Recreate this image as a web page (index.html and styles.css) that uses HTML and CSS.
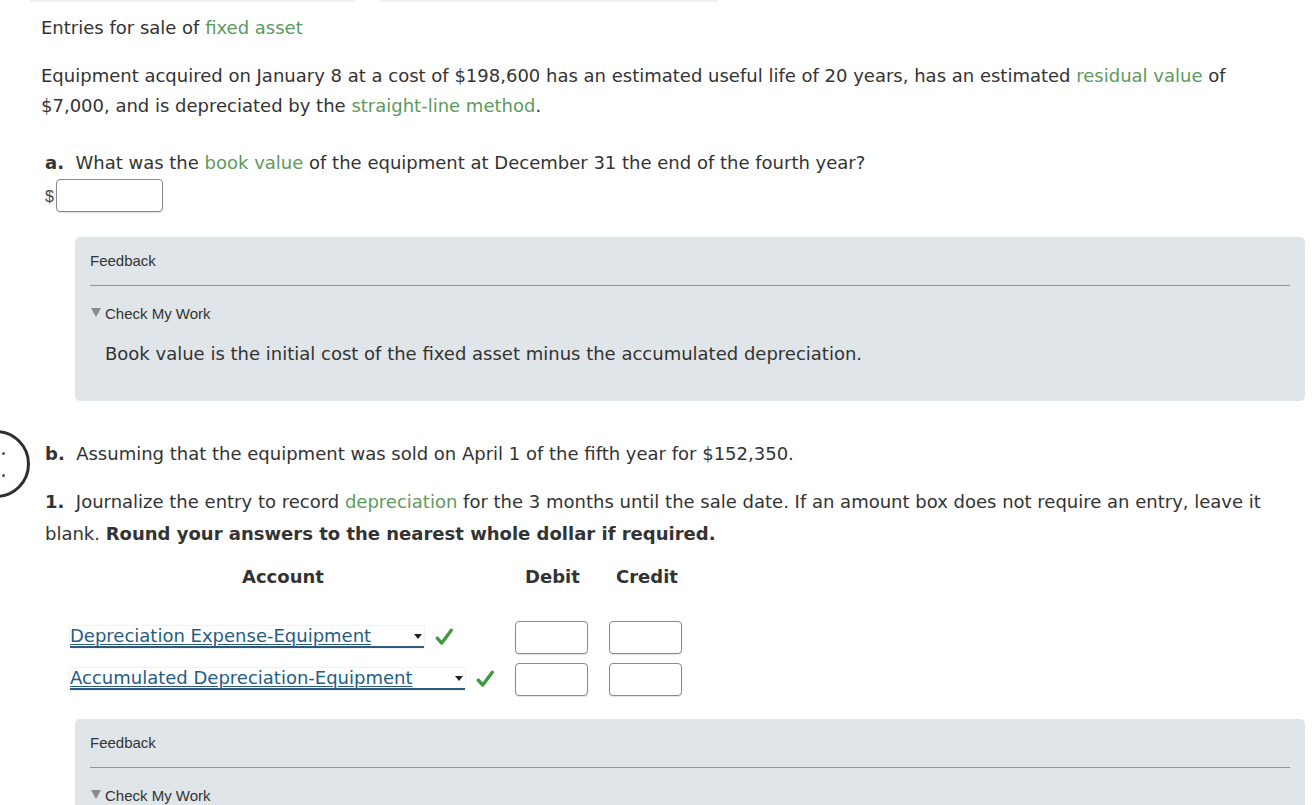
FILE: index.html
```html
<!DOCTYPE html>
<html>
<head>
<meta charset="utf-8">
<link rel="stylesheet" href="styles.css">
</head>
<body>
<div class="topbars"><span class="tb tb1"></span><span class="tb tb2"></span></div>
<div class="side-circle"><span class="dot d1"></span><span class="dot d2"></span></div>
<main class="page">
  <h1 class="title">Entries for sale of <span class="term">fixed asset</span></h1>
  <p class="intro">Equipment acquired on January 8 at a cost of $198,600 has an estimated useful life of 20 years, has an estimated <span class="term">residual value</span> of $7,000, and is depreciated by the <span class="term">straight-line method</span>.</p>

  <section class="part">
    <p class="q"><b>a.</b>&nbsp; What was the <span class="term">book value</span> of the equipment at December 31 the end of the fourth year?</p>
    <div class="money"><span class="dollar">$</span><span class="box wide"></span></div>
  </section>

  <div class="feedback">
    <div class="fb-head">Feedback</div>
    <div class="fb-rule"></div>
    <div class="fb-toggle"><span class="tri"></span>Check My Work</div>
    <p class="fb-text">Book value is the initial cost of the fixed asset minus the accumulated depreciation.</p>
  </div>

  <section class="part partb">
    <p class="q"><b>b.</b>&nbsp; Assuming that the equipment was sold on April 1 of the fifth year for $152,350.</p>
    <p class="q q1"><b>1.</b>&nbsp; Journalize the entry to record <span class="term">depreciation</span> for the 3 months until the sale date. If an amount box does not require an entry, leave it blank. <b>Round your answers to the nearest whole dollar if required.</b></p>
  </section>

  <div class="journal">
    <div class="jhead">
      <span class="h-acct">Account</span>
      <span class="h-debit">Debit</span>
      <span class="h-credit">Credit</span>
    </div>
    <div class="jrow r1">
      <div class="acct"><span class="sel s1">Depreciation Expense-Equipment<span class="arrow"></span></span><svg class="check" viewBox="0 0 16 16" width="18" height="18"><path d="M2 9 L6 13.4 L14.5 2" fill="none" stroke="#3f9b3f" stroke-width="3" stroke-linecap="round" stroke-linejoin="round"/></svg></div>
      <span class="box amt"></span><span class="box amt"></span>
    </div>
    <div class="jrow r2">
      <div class="acct"><span class="sel s2">Accumulated Depreciation-Equipment<span class="arrow"></span></span><svg class="check" viewBox="0 0 16 16" width="18" height="18"><path d="M2 9 L6 13.4 L14.5 2" fill="none" stroke="#3f9b3f" stroke-width="3" stroke-linecap="round" stroke-linejoin="round"/></svg></div>
      <span class="box amt"></span><span class="box amt"></span>
    </div>
  </div>

  <div class="feedback fb2">
    <div class="fb-head">Feedback</div>
    <div class="fb-rule"></div>
    <div class="fb-toggle"><span class="tri"></span>Check My Work</div>
  </div>
</main>
</body>
</html>
```

FILE: styles.css
```css
html, body {
  margin: 0;
  padding: 0;
  background: #fff;
  overflow: hidden;
}
body {
  font-family: "DejaVu Sans", Verdana, sans-serif;
  font-size: 18px;
  color: #333;
  height: 805px;
  position: relative;
}
.topbars {
  display: flex;
  height: 3px;
}
.tb {
  display: block;
  height: 2px;
  background: #f1f1f1;
}
.tb1 { margin-left: 30px; width: 325px; }
.tb2 { margin-left: 25px; width: 338px; }

.side-circle {
  position: absolute;
  left: -38px;
  top: 430px;
  width: 62px;
  height: 62px;
  border: 3px solid #2e2e2e;
  border-radius: 50%;
}
.dot {
  position: absolute;
  width: 3px;
  height: 3px;
  background: #555;
  border-radius: 50%;
  left: 37px;
}
.d1 { top: 19px; }
.d2 { top: 41px; }

.page {
  padding-left: 41px;
}
.term { color: #5d9a5d; }

.title {
  font-size: 18px;
  font-weight: normal;
  margin: 0;
  padding-top: 14px;
  line-height: 22px;
}
.intro {
  margin: 22px 0 0;
  line-height: 30px;
  width: 1215px;
}
.part {
  padding-left: 4px;
}
.q {
  margin: 0;
  line-height: 32px;
}
.part .q:first-child { margin-top: 26px; }
.q b { font-weight: bold; }
.money {
  display: flex;
  align-items: center;
  height: 34px;
  margin-top: -1px;
}
.dollar {
  font-family: "Liberation Sans", Arial, sans-serif;
  font-size: 16px;
  color: #444;
  width: 11px;
  padding-top: 4px;
}
.box {
  display: block;
  box-sizing: border-box;
  border: 1px solid #8a8a8a;
  border-radius: 4px;
  background: #fff;
  box-shadow: 0 1px 1px rgba(0,0,0,0.12);
}
.box.wide { width: 107px; height: 33px; }

.feedback {
  margin: 25px 0 0 34px;
  width: 1230px;
  background: #dfe5e8;
  border-radius: 5px;
  box-sizing: border-box;
  padding: 14px 15px 0 15px;
  height: 164px;
  font-family: "Liberation Sans", Arial, sans-serif;
  font-size: 15px;
  color: #333;
}
.fb-head {
  line-height: 20px;
}
.fb-rule {
  height: 1px;
  background: #8b9599;
  margin-top: 14px;
}
.fb-toggle {
  margin-top: 19px;
  line-height: 18px;
  display: flex;
  align-items: center;
}
.tri {
  display: inline-block;
  width: 0;
  height: 0;
  border-left: 5px solid transparent;
  border-right: 5px solid transparent;
  border-top: 9px solid #8a8a8a;
  margin-right: 4px;
  margin-left: 1px;
  margin-top: -3px;
}
.fb-text {
  margin: 20px 0 0 15px;
  font-family: "DejaVu Sans", Verdana, sans-serif;
  font-size: 18px;
  line-height: 22px;
}

.partb .q:first-child { margin-top: 37px; }
.q1 { margin-top: 16px !important; }

.journal {
  padding-left: 4px;
}
.jhead {
  display: flex;
  font-weight: bold;
  font-size: 18px;
  line-height: 22px;
  margin-top: 16px;
}
.h-acct { margin-left: 197px; width: 283px; }
.h-debit { width: 91px; }

.jrow {
  display: flex;
  align-items: center;
  height: 32px;
}
.r1 { margin-top: 33px; }
.r2 { margin-top: 10px; }
.acct {
  width: 470px;
  box-sizing: border-box;
  padding-left: 25px;
  display: flex;
  align-items: center;
}
.sel {
  position: relative;
  display: inline-block;
  box-sizing: border-box;
  color: #245d86;
  font-size: 18px;
  line-height: 20px;
  border-bottom: 2px solid #2c5a7c;
  text-decoration: underline;
  text-decoration-color: #2c5a7c;
  text-underline-offset: 2px;
  box-shadow: 0 0 2px rgba(0,0,0,0.15);
  white-space: nowrap;
}
.s1 { width: 354px; }
.s2 { width: 395px; }
.arrow {
  position: absolute;
  right: 2px;
  top: 8px;
  width: 0;
  height: 0;
  border-left: 4px solid transparent;
  border-right: 4px solid transparent;
  border-top: 5px solid #222;
}
.check { margin-left: 11px; }
.box.amt {
  width: 73px;
  height: 33px;
  margin-right: 21px;
}

.fb2 {
  margin-top: 24px;
  height: 120px;
}
```
